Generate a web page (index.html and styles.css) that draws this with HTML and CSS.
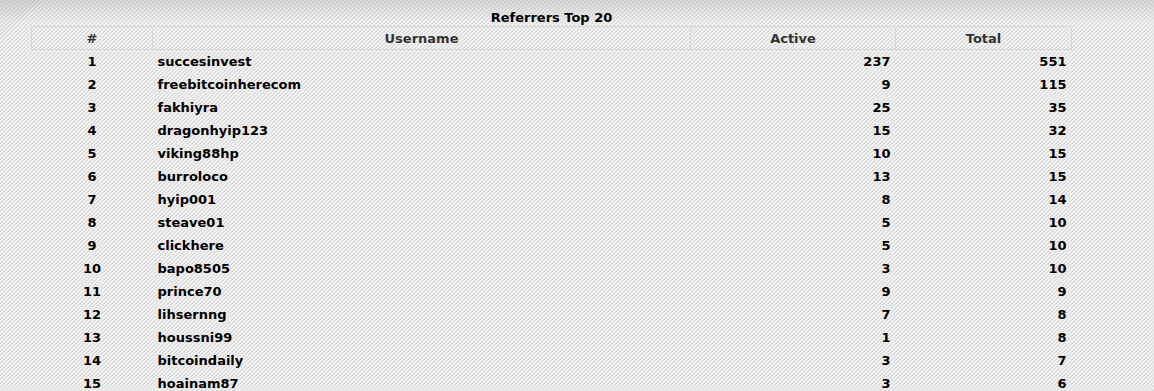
FILE: index.html
```html
<!DOCTYPE html>
<html>
<head>
<meta charset="utf-8">
<link rel="stylesheet" href="styles.css">
</head>
<body>
<div class="page">
<table class="ref">
<caption>Referrers Top 20</caption>
<thead>
<tr><th class="c-rank">#</th><th class="c-user">Username</th><th class="c-active">Active</th><th class="c-total">Total</th></tr>
</thead>
<tbody>
<tr><td class="rank">1</td><td class="user">succesinvest</td><td class="num">237</td><td class="num">551</td></tr>
<tr><td class="rank">2</td><td class="user">freebitcoinherecom</td><td class="num">9</td><td class="num">115</td></tr>
<tr><td class="rank">3</td><td class="user">fakhiyra</td><td class="num">25</td><td class="num">35</td></tr>
<tr><td class="rank">4</td><td class="user">dragonhyip123</td><td class="num">15</td><td class="num">32</td></tr>
<tr><td class="rank">5</td><td class="user">viking88hp</td><td class="num">10</td><td class="num">15</td></tr>
<tr><td class="rank">6</td><td class="user">burroloco</td><td class="num">13</td><td class="num">15</td></tr>
<tr><td class="rank">7</td><td class="user">hyip001</td><td class="num">8</td><td class="num">14</td></tr>
<tr><td class="rank">8</td><td class="user">steave01</td><td class="num">5</td><td class="num">10</td></tr>
<tr><td class="rank">9</td><td class="user">clickhere</td><td class="num">5</td><td class="num">10</td></tr>
<tr><td class="rank">10</td><td class="user">bapo8505</td><td class="num">3</td><td class="num">10</td></tr>
<tr><td class="rank">11</td><td class="user">prince70</td><td class="num">9</td><td class="num">9</td></tr>
<tr><td class="rank">12</td><td class="user">lihsernng</td><td class="num">7</td><td class="num">8</td></tr>
<tr><td class="rank">13</td><td class="user">houssni99</td><td class="num">1</td><td class="num">8</td></tr>
<tr><td class="rank">14</td><td class="user">bitcoindaily</td><td class="num">3</td><td class="num">7</td></tr>
<tr><td class="rank">15</td><td class="user">hoainam87</td><td class="num">3</td><td class="num">6</td></tr>
</tbody>
</table>
</div>
</body>
</html>
```
FILE: styles.css
```css
html, body {
  margin: 0;
  padding: 0;
}
body {
  font-family: "DejaVu Sans", Verdana, sans-serif;
  font-size: 13px;
  font-weight: bold;
  color: #000;
  background:
    linear-gradient(to bottom, rgba(0,0,0,0.10), rgba(0,0,0,0) 22px),
    repeating-linear-gradient(135deg, #f3f3f3 0px, #f3f3f3 1.4px, #dedede 1.4px, #dedede 2.83px);
  background-color: #ebebeb;
  height: 391px;
  overflow: hidden;
}
.page {
  padding: 10px 0 0 31px;
}
.ref {
  width: 1040px;
  border-collapse: collapse;
  table-layout: fixed;
}
.ref caption {
  color: #000;
  line-height: 16px;
  padding-bottom: 0;
}
.ref th,
.ref td {
  box-sizing: border-box;
  padding: 0 5px;
}
.ref th {
  color: #333;
  border: 1px solid #d6d6d6;
  height: 23px;
  text-align: center;
  line-height: 21px;
}
.c-rank { width: 121px; }
.c-user { width: 538px; }
.c-active { width: 205px; }
.c-total { width: 176px; }
.ref td {
  height: 23px;
  line-height: 23px;
  white-space: nowrap;
}
.rank { text-align: center; }
.user { text-align: left; }
.num { text-align: right; }
```
